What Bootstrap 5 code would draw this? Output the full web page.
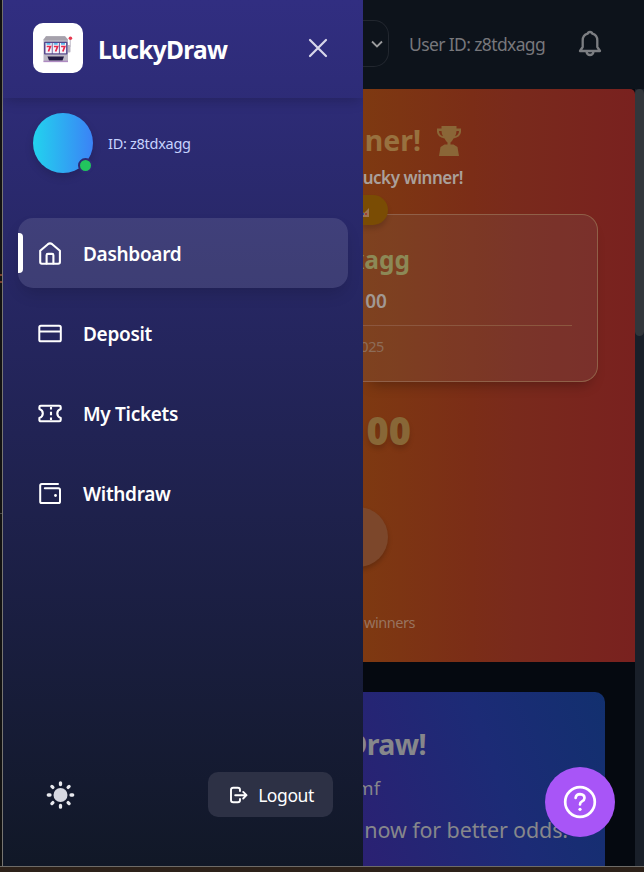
<!DOCTYPE html>
<html lang="en">
<head>
<meta charset="utf-8">
<meta name="viewport" content="width=device-width, initial-scale=1">
<title>LuckyDraw</title>
<link href="https://cdn.jsdelivr.net/npm/bootstrap@5.3.0/dist/css/bootstrap.min.css" rel="stylesheet">
<style>
body{font-family:"Noto Sans","Open Sans",sans-serif;background:#2d2119;color:#fff;height:872px;overflow:hidden}
.stage{height:867px;border-bottom:1px solid #6d6b68;background:#050910}
.edge{width:3px;background:#111;border-right:1px solid #777571;padding-top:274px}
.tick{width:2px;height:9px;border-top:2px solid #7a4030;border-bottom:2px solid #7a4030}
.tick2{width:2px;height:1px;margin-top:230px;background:#4a4a4a}
.ln{white-space:nowrap;display:block}
/* drawer */
.drawer{width:360px;background:linear-gradient(#312e81,#111827)}
.drawer-head{height:98px;padding:0 35px 2px 30px;box-shadow:0 5px 12px -2px rgba(0,0,0,.2)}
.logo-tile{width:50px;height:50px;border-radius:10px;background:#fff;padding-top:4px}
.brand-name{font-size:24.5px;font-weight:700;letter-spacing:-.7px;margin-left:15px;line-height:34px;padding-top:4px}
.profile{padding:15px 30px 0;height:120px}
.avatar{width:60px;height:60px;background:linear-gradient(90deg,#22d3ee,#3b82f6);box-shadow:0 4px 8px rgba(0,0,0,.15)}
.online{width:15px;height:15px;right:0;bottom:0;background:#22c55e;border:2px solid #2d2a74}
.uid{font-size:14.5px;letter-spacing:-.28px;color:#c7d2fe;margin-left:15px;padding-top:2px}
.menu{padding:0 15px;gap:10px}
.menu-link{height:70px;border-radius:15px;padding:0 19px;font-size:19px;font-weight:600;letter-spacing:-.3px;color:#fff;text-decoration:none}
.menu-link:hover{color:#fff}
.menu-link .ln{padding-top:2px}
.menu-link svg{width:26px;height:26px;margin-right:20px;margin-top:1px}
.menu-link.current{background:rgba(255,255,255,.11);box-shadow:0 8px 16px -3px rgba(0,0,0,.16)}
.bar{width:5px;height:40px;left:0;top:15px;background:#fff;border-radius:0 4px 4px 0}
.foot{padding:0 30px 49px 43px}
.logout{width:125px;height:45px;border-radius:10px;background:#2d3145;color:#fff;font-size:17.5px;letter-spacing:-.42px;border:0;padding:2px 0 0 1px}
.logout:hover{background:#2d3145;color:#fff}
/* page behind */
.topbar{height:89px;background:#0d131b;color:#77777b}
.picker{width:26px;height:47px;border:1px solid #22272f;border-left:0;border-radius:0 15px 15px 0;margin-top:-2px}
.topbar .ln{font-size:17.5px;letter-spacing:-.62px;margin-left:20px}
.bell{margin-right:41px;margin-top:-3px}
.view{width:272px}
.track{width:9px;background:#191f29}
.thumb{height:247px;background:#32363b;border-radius:5px}
.winner{height:573px;background:linear-gradient(90deg,#7e3911 0%,#7b2d17 40%,#792a1c 56%,#79211f 100%);border-radius:0 5px 0 0;padding-top:32px}
.headline{gap:15px;padding-right:173px}
.t1{font-size:28.5px;font-weight:700;line-height:38px;color:#98713f}
.t2{font-size:17px;font-weight:600;letter-spacing:-.45px;line-height:24px;margin:7px 172px 0 0;color:#aaa09b}
.prize{width:235px;height:168px;margin-top:24px;border:1px solid #906048;border-left:0;border-radius:0 16px 16px 0;background:rgba(130,130,130,.13);box-shadow:0 9px 14px -7px rgba(0,0,0,.3)}
.crown{right:209px;top:-20px;width:26px;height:30px;border-radius:0 15px 15px 0;background:#7a4c04;box-shadow:0 4px 5px rgba(0,0,0,.15)}
.crown svg{position:absolute;left:-1px;top:12px}
.n1{font-size:24.5px;font-weight:700;line-height:34px;margin:28px 187px 0 0;color:#8c8956}
.n2{font-size:19px;font-weight:600;line-height:28px;margin:10px 210px 0 0;color:#a19893}
.rule{width:209px;height:1px;background:#8c573f;margin-top:10px}
.n3{font-size:14.5px;letter-spacing:-.4px;line-height:20px;margin:10px 213px 0 0;color:#8d6c58}
.big{font-size:38px;font-weight:900;line-height:48px;margin:24px 224px 0 0;color:#886737;text-shadow:0 4px 5px rgba(0,0,0,.15)}
.disc{width:25px;height:60px;margin-top:53px}
.disc div{width:60px;height:60px;background:#7c472b;box-shadow:0 3px 5px rgba(0,0,0,.2)}
.n4{font-size:14.5px;letter-spacing:-.45px;line-height:20px;margin:45px 220px 0 0;color:#98735f}
.promo{width:242px;height:174px;margin-top:30px;border-radius:0 10px 0 0;background:linear-gradient(70deg,#2b2173,#1c2b76 55%,#12306f);color:#86878b;padding-top:33px}
.p1{font-size:28.5px;font-weight:700;letter-spacing:-.6px;line-height:38px;margin-right:179px}
.p2{font-size:18.5px;line-height:26px;margin:12px 225px 0 0}
.p3{font-size:21.5px;letter-spacing:-.13px;line-height:30px;margin:14px 37px 0 0}
.help{width:70px;height:70px;left:545px;top:767px;background:#a855f7;border:0}
</style>
<script src="https://cdn.jsdelivr.net/npm/bootstrap@5.3.0/dist/js/bootstrap.bundle.min.js"></script>
</head>
<body>
<div class="stage d-flex position-relative overflow-hidden">
  <div class="edge flex-shrink-0"><div class="tick"></div><div class="tick2"></div></div>
  <aside class="drawer d-flex flex-column flex-shrink-0">
    <div class="drawer-head d-flex align-items-center flex-shrink-0">
      <div class="logo-tile d-flex align-items-center justify-content-center">
        <svg width="32" height="30" viewBox="0 0 32 30">
          <path d="M26 17.500V10h2.500v6.500q0 1-1 1z" fill="#b9b3c2"/><path d="M28.300 5v7" stroke="#c9c4d0" stroke-width="1.200"/><circle cx="28.400" cy="3.200" r="1.800" fill="#e63950"/>
          <path d="M4 1.200h19l3 3v22.800H1.500V4.200z" fill="#bdb8c5"/><path d="M4 1.200h19l3 4H1.500z" fill="#a5a1ab"/>
          <rect x="2" y="6.800" width="23.500" height="12.700" rx="1" fill="#55478c"/>
          <g fill="#f5f3fb"><rect x="3.500" y="8" width="6.300" height="10.300"/><rect x="10.600" y="8" width="6.300" height="10.300"/><rect x="17.800" y="8" width="6.300" height="10.300"/></g>
          <path d="M4.500 8h4v1.700h-4zM11.700 8h4v1.700h-4zM19 8h4v1.700h-4z" fill="#5cb8ec"/>
          <path d="M4.700 11.500h3.700L6.400 16.500M11.900 11.500h3.700L13.600 16.500M19.100 11.500h3.700L20.800 16.500" fill="none" stroke="#e8284b" stroke-width="1.700"/>
          <path d="M5.500 21.500h16.500l-1.500 4H7z" fill="#211a42"/><path d="M1.500 25.700h24.500v1.500H1.500z" fill="#a56dc0" opacity=".6"/>
        </svg>
      </div>
      <span class="brand-name ln">LuckyDraw</span>
      <svg class="ms-auto" width="20" height="20" viewBox="0 0 20 20" fill="none" stroke="#d8d7ea" stroke-width="2.200" stroke-linecap="round"><path d="M2 2l16 16M18 2L2 18"/></svg>
    </div>
    <div class="profile d-flex align-items-start flex-shrink-0">
      <div class="avatar rounded-circle position-relative"><span class="online rounded-circle position-absolute"></span></div>
      <span class="uid ln align-self-start mt-3 pt-1">ID: z8tdxagg</span>
    </div>
    <nav class="menu d-flex flex-column">
      <a class="menu-link current d-flex align-items-center position-relative" href="#"><span class="bar position-absolute"></span>
        <svg viewBox="0 0 26 26" fill="none" stroke="#fff" stroke-width="2.100" stroke-linejoin="round" stroke-linecap="round"><path d="M3.200 9.800 10.900 3.200Q13 1.600 15.200 3.200L22.900 9.800V21Q22.900 22.700 21.200 22.700H4.900Q3.200 22.700 3.200 21Z"/><path d="M9.600 22.500v-8.300q0-1.300 1.300-1.300h4.200q1.300 0 1.300 1.300v8.300"/></svg>
        <span class="ln">Dashboard</span></a>
      <a class="menu-link d-flex align-items-center" href="#">
        <svg viewBox="0 0 26 26" fill="none" stroke="#fff" stroke-width="2"><rect x="2.300" y="4.700" width="21.500" height="15.600" rx="1.600"/><path d="M2.300 10.500h21.500"/></svg>
        <span class="ln">Deposit</span></a>
      <a class="menu-link d-flex align-items-center" href="#">
        <svg viewBox="0 0 26 26" fill="none" stroke="#fff" stroke-width="2.100" stroke-linejoin="round"><path d="M3.800 4.700H22.300Q23.700 4.700 23.700 6V8.100Q20.300 9.300 20.300 12.500T23.700 16.900V19Q23.700 20.300 22.300 20.300H3.800Q2.400 20.300 2.400 19V16.900Q5.800 15.700 5.800 12.500T2.400 8.100V6Q2.400 4.700 3.800 4.700Z"/><path d="M14 6v2.500M14 10.700v3.600M14 16.500V19"/></svg>
        <span class="ln">My Tickets</span></a>
      <a class="menu-link d-flex align-items-center" href="#">
        <svg viewBox="0 0 26 26" fill="none" stroke="#fff" stroke-width="2" stroke-linejoin="round" stroke-linecap="round"><path d="M21 3H4.800Q3.200 3 3.200 4.600V20.400Q3.200 22 4.800 22H21.400Q23 22 23 20.400V8.800Q23 7.200 21.400 7.200H7.800"/><circle cx="18.500" cy="14.500" r="1.400" fill="#fff" stroke="none"/></svg>
        <span class="ln">Withdraw</span></a>
    </nav>
    <div class="foot mt-auto d-flex align-items-center justify-content-between">
      <svg width="30" height="30" viewBox="0 0 30 30" fill="#d6d8e1" stroke="#e8e9ee" stroke-width="3.300" stroke-linecap="round"><circle cx="14.500" cy="15" r="7" stroke="none"/><path d="M14.500 2.800v1.700M14.500 25.500v1.700M2.300 15H4M25 15h1.700M5.900 6.400l1 1M22.100 22.600l1 1M5.900 23.600l1-1M22.100 7.400l1-1"/></svg>
      <button class="logout btn d-flex align-items-center justify-content-center" type="button">
        <svg class="me-2" width="22" height="20" viewBox="0 0 22 20" fill="none" stroke="#fff" stroke-width="1.900" stroke-linecap="round" stroke-linejoin="round"><path d="M12 5V4Q12 1.700 9.800 1.700H5.300Q3 1.700 3 4V14Q3 16.300 5.300 16.300H9.800Q12 16.300 12 14V13M7.200 9.200H18.500M15.200 5.900 18.500 9.200 15.200 12.500"/></svg>
        <span class="ln">Logout</span></button>
    </div>
  </aside>

  <div class="flex-grow-1 overflow-hidden">
    <header class="topbar d-flex align-items-center">
      <div class="picker d-flex align-items-center justify-content-end pe-1"><svg width="14" height="10" viewBox="0 0 14 10" fill="none" stroke="#9a9b9d" stroke-width="1.800"><path d="M2 2.500l5 5 5-5"/></svg></div>
      <span class="ln">User ID: z8tdxagg</span>
      <svg class="bell ms-auto" width="26" height="28" viewBox="0 0 26 28" fill="none" stroke="#7c7e82" stroke-width="2.300" stroke-linejoin="round"><path d="M3 22H23L20.300 18V11.500Q20.300 6 15.300 4.700 15 3 13 3T10.700 4.700Q5.700 6 5.700 11.500V18Z"/><path d="M9.500 22.500Q10 26 13 26T16.500 22.500"/></svg>
    </header>
    <div class="d-flex">
      <main class="view overflow-hidden flex-shrink-0">
        <section class="winner d-flex flex-column">
          <div class="headline d-flex align-items-center justify-content-end">
            <span class="t1 ln">ner!</span>
            <svg width="26" height="32" viewBox="0 0 26 32" fill="#8a6637"><path d="M5.500 2h15v2.500H25v3.500q-.5 5-7.500 6.500-1.500 3-3 4v2h3l4 2.500L23 32H3l1.500-9 4-2.500h3v-2q-1.500-1-3-4Q1.500 13 1 8V4.500h4.500zM3 7q0 4 4 5.300Q5.500 9.500 5.500 7zM23 7h-2.500q0 2.500-1.500 5.300Q23 11 23 7z" fill-rule="evenodd"/></svg>
          </div>
          <span class="t2 ln align-self-end">ucky winner!</span>
          <div class="prize d-flex flex-column position-relative">
            <div class="crown position-absolute"><svg width="10" height="12" viewBox="0 0 10 12"><path d="M0 4l3 2 5-5v9H0z" fill="#9d7652"/><path d="M1 6h2v2H1z" fill="#35528b"/><circle cx="5" cy="7" r="1" fill="#a12d2e"/></svg></div>
            <span class="n1 ln align-self-end">xagg</span>
            <span class="n2 ln align-self-end">00</span>
            <div class="rule"></div>
            <span class="n3 ln align-self-end">025</span>
          </div>
          <span class="big ln align-self-end">00</span>
          <div class="disc d-flex justify-content-end"><div class="rounded-circle flex-shrink-0"></div></div>
          <span class="n4 ln align-self-end">winners</span>
        </section>
        <section class="promo d-flex flex-column">
          <span class="p1 ln align-self-end">Draw!</span>
          <span class="p2 ln align-self-end">mf</span>
          <span class="p3 ln align-self-end">now for better odds!</span>
        </section>
      </main>
      <div class="track"><div class="thumb"></div></div>
    </div>
  </div>
  <button class="help rounded-circle position-absolute d-flex align-items-center justify-content-center" type="button" aria-label="Help"><svg width="36" height="36" viewBox="0 0 36 36" fill="none" stroke="#fff" stroke-width="2.700" stroke-linecap="round"><circle cx="18" cy="18" r="14.800"/><path d="M13.600 14Q14.200 10.200 18 10.200 22.500 10.500 22.500 14 22.500 16 20 17.400 18 18.500 18 20.500"/><circle cx="18" cy="25.300" r="1.600" fill="#fff" stroke="none"/></svg></button>
</div>
</body>
</html>
